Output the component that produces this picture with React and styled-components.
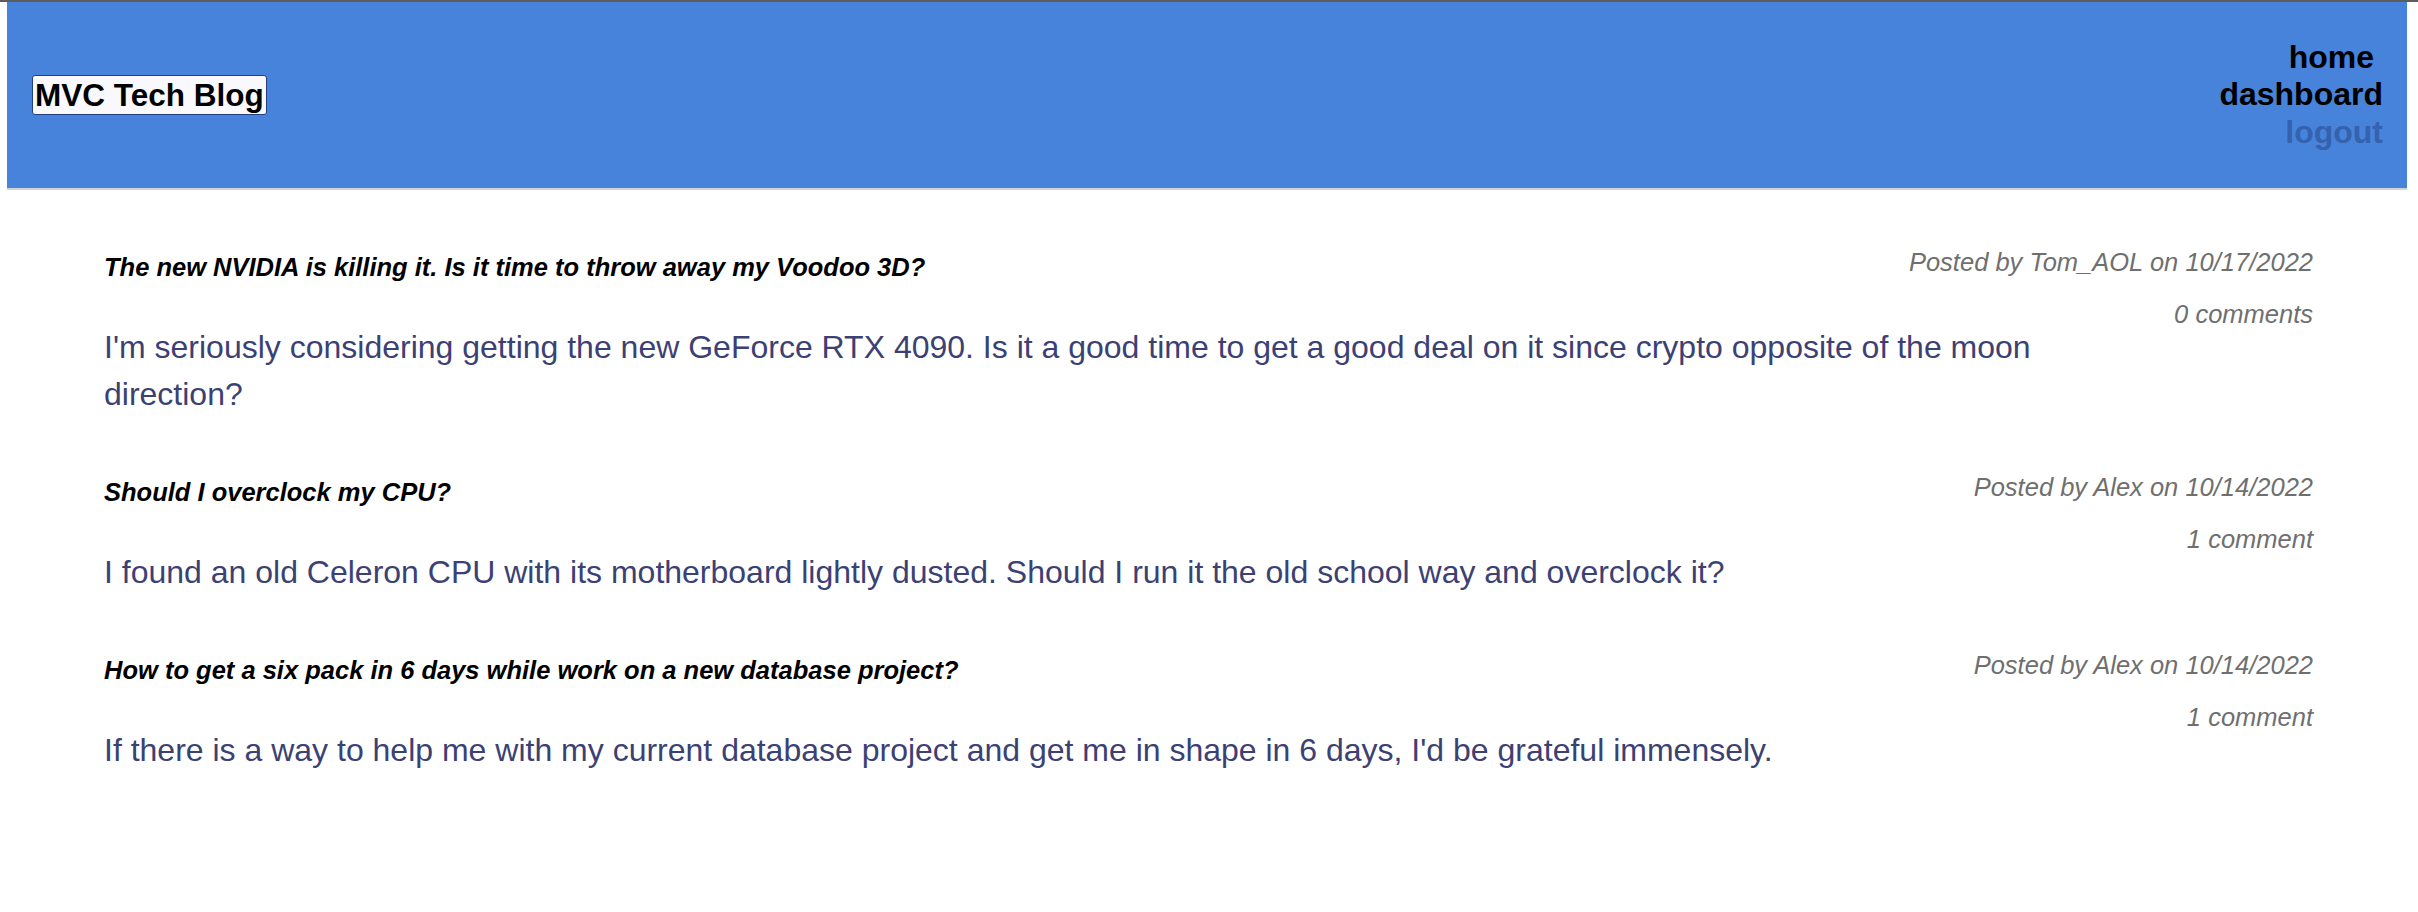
import React from "react";
import styled, { createGlobalStyle } from "styled-components";

const GlobalStyle = createGlobalStyle`
  html, body {
    margin: 0;
    padding: 0;
    background: #ffffff;
    font-family: "Liberation Sans", Arial, Helvetica, sans-serif;
  }
`;

const TopStrip = styled.div`
  height: 2px;
  background: #5c5c5c;
`;

const Header = styled.header`
  box-sizing: border-box;
  height: 188px;
  margin: 0 11px 0 7px;
  padding: 0 24px 0 25px;
  background: #4883db;
  border-bottom: 2px solid #d3d3d3;
  display: flex;
  justify-content: space-between;
  align-items: center;
`;

const Logo = styled.a`
  display: inline-block;
  padding: 1px 2px;
  border: 1px solid #233f82;
  border-radius: 3px;
  background: #f9f9fd;
  color: #000;
  font-size: 31.5px;
  line-height: 36px;
  font-weight: 700;
  text-decoration: none;
`;

const Nav = styled.nav`
  display: flex;
  flex-direction: column;
  align-items: flex-end;
`;

const NavLink = styled.a`
  font-size: 32px;
  line-height: 37.5px;
  font-weight: 700;
  text-decoration: none;
  color: ${(p) => (p.$muted ? "#3462ae" : "#000000")};
  padding-right: ${(p) => (p.$trail ? "9px" : "0")};
`;

const Main = styled.main`
  padding: 60px 105px 40px 104px;
  display: flex;
  flex-direction: column;
  gap: 57px;
`;

const Post = styled.article`
  display: flex;
  flex-direction: column;
`;

const PostHead = styled.div`
  display: flex;
  justify-content: space-between;
  align-items: flex-start;
  height: 32px;
`;

const PostTitle = styled.h2`
  margin: 2px 0 0 0;
  font-size: 25.5px;
  line-height: 30px;
  font-weight: 700;
  font-style: italic;
  color: #000;
`;

const MetaLine = styled.div`
  font-size: 25.5px;
  line-height: 24px;
  font-style: italic;
  color: #6f6f6f;
  text-align: right;
  margin-top: ${(p) => p.$gap || "0"};
`;

const PostBody = styled.p`
  max-width: 90%;
  margin: -2px 0 0 0;
  font-size: 32px;
  line-height: 47px;
  color: #3c4174;
`;

const posts = [
  {
    title: "The new NVIDIA is killing it. Is it time to throw away my Voodoo 3D?",
    author: "Tom_AOL",
    date: "10/17/2022",
    comments: "0 comments",
    body:
      "I'm seriously considering getting the new GeForce RTX 4090. Is it a good time to get a good deal on it since crypto opposite of the moon direction?",
  },
  {
    title: "Should I overclock my CPU?",
    author: "Alex",
    date: "10/14/2022",
    comments: "1 comment",
    body:
      "I found an old Celeron CPU with its motherboard lightly dusted. Should I run it the old school way and overclock it?",
  },
  {
    title: "How to get a six pack in 6 days while work on a new database project?",
    author: "Alex",
    date: "10/14/2022",
    comments: "1 comment",
    body:
      "If there is a way to help me with my current database project and get me in shape in 6 days, I'd be grateful immensely.",
  },
];

export default function App() {
  return (
    <>
      <GlobalStyle />
      <TopStrip />
      <Header>
        <Logo href="#">MVC Tech Blog</Logo>
        <Nav>
          <NavLink href="#" $trail>home</NavLink>
          <NavLink href="#">dashboard</NavLink>
          <NavLink href="#" $muted>logout</NavLink>
        </Nav>
      </Header>
      <Main>
        {posts.map((p, i) => (
          <Post key={i}>
            <PostHead>
              <PostTitle>{p.title}</PostTitle>
              <MetaLine>
                Posted by {p.author} on {p.date}
              </MetaLine>
            </PostHead>
            <MetaLine $gap="20px">{p.comments}</MetaLine>
            <PostBody>{p.body}</PostBody>
          </Post>
        ))}
      </Main>
    </>
  );
}
